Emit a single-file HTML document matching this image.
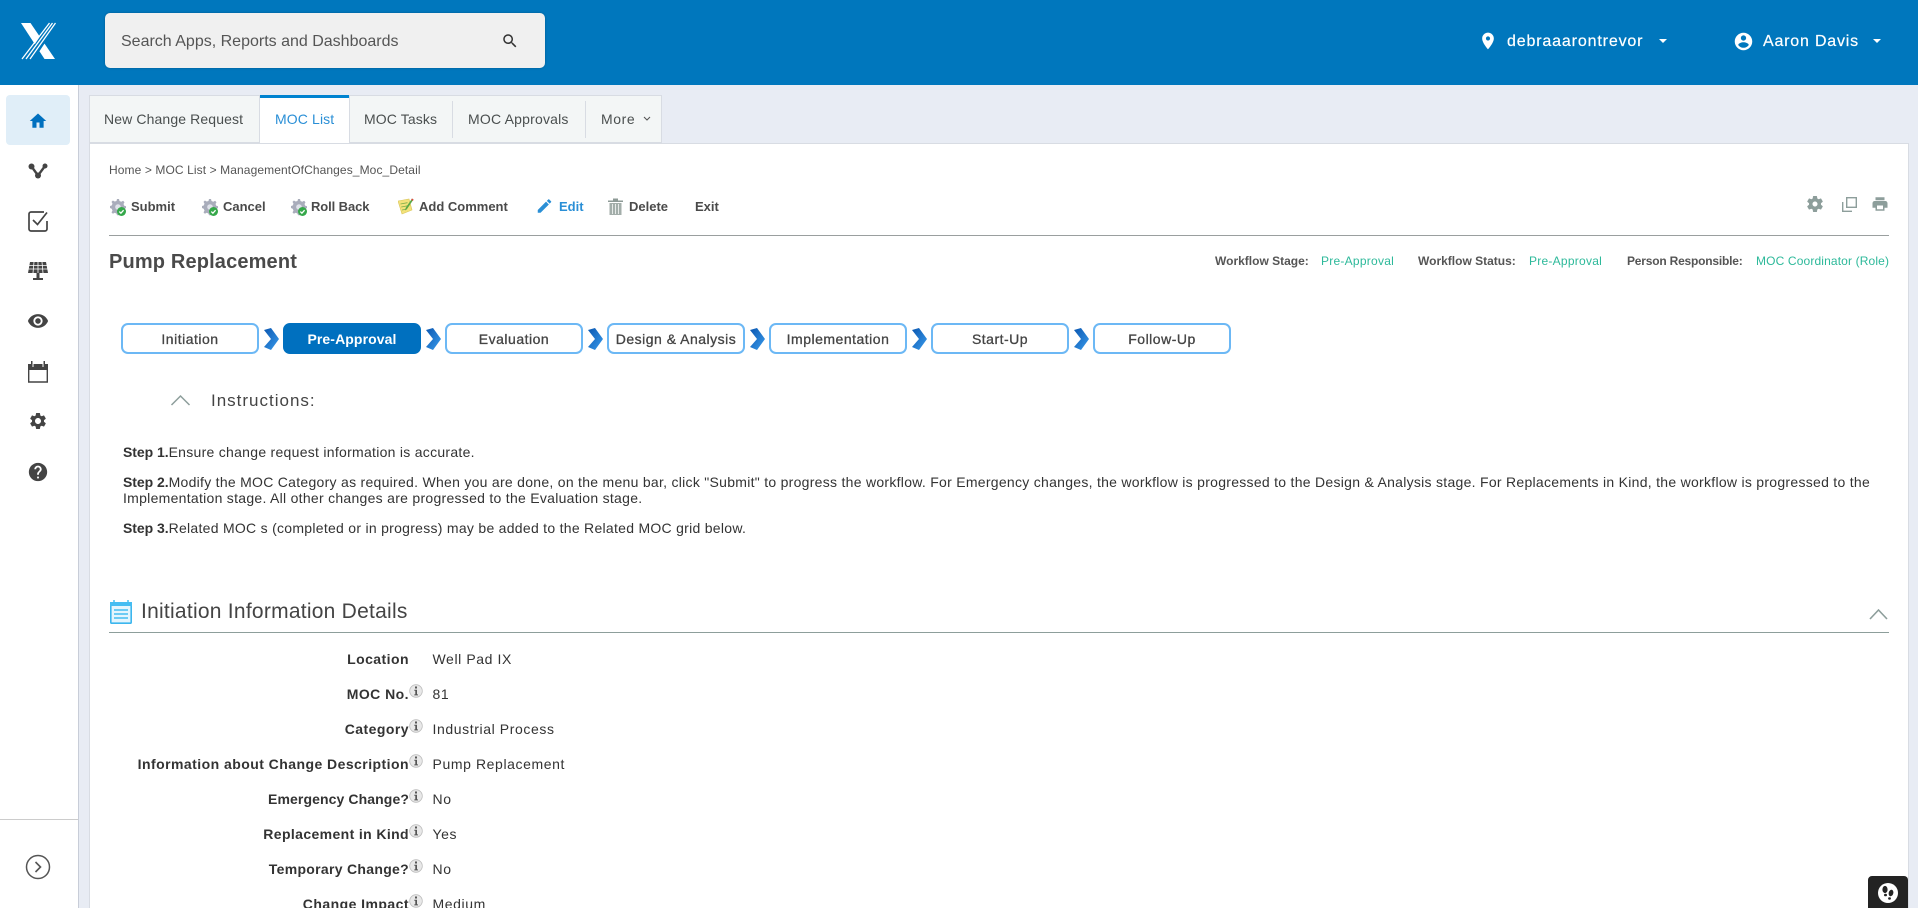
<!DOCTYPE html>
<html lang="en">
<head>
<meta charset="utf-8">
<title>Pump Replacement</title>
<style>
html,body{margin:0;padding:0;width:1918px;height:908px;overflow:hidden;background:#e8ecf4;font-family:"Liberation Sans",Arial,sans-serif;color:#444}
#page{position:relative;width:1918px;height:908px;overflow:hidden;filter:blur(.3px)}
.a{position:absolute}
.t{position:absolute;line-height:20px;white-space:nowrap}
svg{position:absolute;display:block}
#hdr{left:0;top:0;width:1918px;height:85px;background:#0077bd}
#search{left:105px;top:13px;width:440px;height:55px;background:#f0f0f0;border-radius:5px;box-shadow:0 0 2px rgba(0,0,0,.25)}
#side{left:0;top:85px;width:78px;height:823px;background:#fff;border-right:1px solid #c8cdd8}
#homebg{left:6px;top:95px;width:64px;height:50px;background:#e0eef8;border-radius:4px}
#panel{left:89px;top:143px;width:1820px;height:765px;background:#fff;box-sizing:border-box;border:1px solid #d8dce3;border-bottom:0}
.tab{position:absolute;top:95px;height:48px;background:#f3f6f6;box-sizing:border-box;border-top:1px solid #d8dce3}
.tabt{font-size:14px;letter-spacing:.12px;color:#4a4f4f;top:109px}
.sep{position:absolute;width:1px;top:101px;height:37px;background:#d8dce3}
.tb{font-size:13px;font-weight:bold;color:#4a4a4a;top:197px}
.wl{font-size:12px;font-weight:bold;color:#555;top:251px}
.wv{font-size:12px;color:#2db99a;top:251px;letter-spacing:.25px}
.st{position:absolute;top:323px;width:138px;height:31px;box-sizing:border-box;border:2px solid #6cb8f5;border-radius:7px;background:#fff;text-align:center;font-size:14px;line-height:27px;padding-top:1px;letter-spacing:.5px;color:#444;-webkit-text-stroke:.3px #444;white-space:nowrap}
.st.on{background:#0070bf;border-color:#0070bf;color:#fff;font-weight:bold;font-size:14px;letter-spacing:.1px;-webkit-text-stroke:0}
.p{font-size:14px;letter-spacing:.28px;color:#333;left:123px}
.p b{letter-spacing:-.05px}
.lb{font-size:14px;font-weight:bold;letter-spacing:.45px;color:#333;right:1509px}
.vl{font-size:14px;letter-spacing:.6px;color:#333;left:432.500px}
</style>
</head>
<body>
<div id="page">

<svg width="0" height="0" style="position:absolute">
  <defs>
    <linearGradient id="cg" x1="0" y1="0" x2="1" y2="1"><stop offset="0" stop-color="#0a56b0"/><stop offset="1" stop-color="#3a9cec"/></linearGradient>
    <symbol id="chev" viewBox="0 0 15 22"><path d="M0 2 7 0 15 11 7 22 0 19 7 11z" fill="url(#cg)"/></symbol>
    <symbol id="gearchk" viewBox="0 0 16 18">
      <path d="M7 1h2l.5 2 1.800.8 1.800-1 1.400 1.400-1 1.800.8 1.800 1.700.5v2l-1.700.5-.8 1.800 1 1.800-1.400 1.400-1.800-1-1.800.8-.5 1.700H7l-.5-1.700-1.800-.8-1.800 1-1.400-1.400 1-1.800-.8-1.800L0 10V8l1.700-.5.8-1.800-1-1.800 1.400-1.400 1.800 1L6.500 3z" fill="#a9adbb"/>
      <circle cx="8" cy="9" r="2.800" fill="#dfe2ea"/>
      <circle cx="11.500" cy="13.500" r="4.500" fill="#35a84a"/>
      <path d="M9.300 13.600l1.600 1.600 2.700-3" fill="none" stroke="#fff" stroke-width="1.300"/>
    </symbol>
    <symbol id="info" viewBox="0 0 14 14">
      <circle cx="7" cy="7" r="6.300" fill="#e8e8e8" stroke="#bdbdbd" stroke-width=".8"/>
      <rect x="6" y="2.500" width="2" height="2" fill="#555"/>
      <path d="M5.300 5.800H8v4.600h1v1H5.300v-1h1V6.800h-1z" fill="#555"/>
    </symbol>
  </defs>
</svg>

<!-- Header -->
<div class="a" id="hdr"></div>
<svg style="left:20px;top:21px" width="36" height="40" viewBox="0 0 36 40">
  <path d="M1 2h9.500L35 38H24.500z" fill="#fff"/>
  <path d="M31 2 7 38M33.500 2 11 38M36 2 15 34" stroke="#0077bd" stroke-width="3.400" fill="none"/>
  <path d="M29.500 2 2 38M32.500 2 6 38M35.500 2 10 38" stroke="#fff" stroke-width="1.300" fill="none"/>
</svg>
<div class="a" id="search"></div>
<span class="t" style="left:121px;top:32px;font-size:16px;color:#555">Search Apps, Reports and Dashboards</span>
<svg style="left:501px;top:32px" width="18" height="18" viewBox="0 0 24 24"><path fill="#333" d="M15.500 14h-.79l-.28-.27C15.410 12.590 16 11.110 16 9.500 16 5.910 13.090 3 9.500 3S3 5.910 3 9.500 5.910 16 9.500 16c1.610 0 3.090-.59 4.230-1.570l.27.28v.79l5 4.990L20.490 19l-4.990-5zm-6 0C7.010 14 5 11.990 5 9.500S7.010 5 9.500 5 14 7.010 14 9.500 11.990 14 9.500 14z"/></svg>
<svg style="left:1478px;top:31px" width="20" height="20" viewBox="0 0 24 24"><path fill="#fff" d="M12 2C8.130 2 5 5.130 5 9c0 5.250 7 13 7 13s7-7.750 7-13c0-3.870-3.130-7-7-7zm0 9.500c-1.380 0-2.500-1.120-2.500-2.500s1.120-2.500 2.500-2.500 2.500 1.120 2.500 2.500-1.120 2.500-2.500 2.500z"/></svg>
<span class="t" style="left:1507px;top:31.500px;font-size:16px;letter-spacing:.85px;color:#fff;-webkit-text-stroke:.2px #fff">debraaarontrevor</span>
<div class="a" style="left:1659px;top:39px;border:4px solid transparent;border-top:4px solid #fff;border-bottom:0"></div>
<svg style="left:1733px;top:31px" width="21" height="21" viewBox="0 0 24 24"><path fill="#fff" d="M12 2C6.480 2 2 6.480 2 12s4.480 10 10 10 10-4.480 10-10S17.520 2 12 2zm0 3c1.660 0 3 1.340 3 3s-1.340 3-3 3-3-1.340-3-3 1.340-3 3-3zm0 14.200c-2.500 0-4.710-1.280-6-3.220.03-1.990 4-3.080 6-3.080 1.990 0 5.970 1.090 6 3.080-1.290 1.940-3.500 3.220-6 3.220z"/></svg>
<span class="t" style="left:1763px;top:31.500px;font-size:16px;letter-spacing:.8px;color:#fff;-webkit-text-stroke:.2px #fff">Aaron Davis</span>
<div class="a" style="left:1873px;top:39px;border:4px solid transparent;border-top:4px solid #fff;border-bottom:0"></div>

<!-- Sidebar -->
<div class="a" id="side"></div>
<div class="a" id="homebg"></div>
<svg style="left:29px;top:112px" width="18" height="18" viewBox="0 0 24 24"><path fill="#0070bf" d="M10 21v-7h4v7h5.500v-9H23L12 2 1 12h3.500v9z"/></svg>
<svg style="left:28px;top:161px" width="20" height="20" viewBox="0 0 20 20"><g fill="#444"><circle cx="3.500" cy="5.500" r="3"/><circle cx="17" cy="5" r="2.500"/><circle cx="10" cy="14.500" r="3"/></g><path d="M3.500 5.500 10 14.500 17 5" stroke="#444" stroke-width="2.400" fill="none"/></svg>
<svg style="left:27px;top:210px" width="22" height="22" viewBox="0 0 22 22"><path d="M17 2H4a2 2 0 0 0-2 2v15a2 2 0 0 0 2 2h14a2 2 0 0 0 2-2V11" fill="none" stroke="#444" stroke-width="1.700"/><path d="M6 10l4.500 4.500L20 2.500" fill="none" stroke="#444" stroke-width="1.700"/></svg>
<svg style="left:28px;top:261px" width="20" height="20" viewBox="0 0 20 20"><path fill="#444" d="M2 1h16l2 11H0zM8.500 12h3v5H15v2H5v-2h3.500z"/><path stroke="#fff" stroke-width=".8" d="M1 4.500h18M.5 8h19M6 1 5 12M10 1v11M14 1l1 11"/></svg>
<svg style="left:27px;top:310px" width="22" height="22" viewBox="0 0 24 24"><path fill="#444" d="M12 4.500C7 4.500 2.730 7.610 1 12c1.730 4.390 6 7.500 11 7.500s9.270-3.110 11-7.500c-1.730-4.390-6-7.500-11-7.500zM12 17c-2.760 0-5-2.240-5-5s2.240-5 5-5 5 2.240 5 5-2.240 5-5 5zm0-8c-1.660 0-3 1.340-3 3s1.340 3 3 3 3-1.340 3-3-1.340-3-3-3z"/></svg>
<svg style="left:28px;top:361px" width="20" height="22" viewBox="0 0 20 22"><path fill="#444" d="M0 3h3V0h1.500v3h11V0H17v3h3v6H0z"/><path d="M.7 9v12h18.600V9" fill="#fff" stroke="#444" stroke-width="1.400"/><path d="M4.500 1h1v5h-1zM14.500 1h1v5h-1z" fill="#fff"/></svg>
<svg style="left:28px;top:411px" width="20" height="20" viewBox="0 0 24 24"><path fill="#444" d="M19.140 12.940c.04-.3.060-.61.060-.94 0-.32-.02-.64-.07-.94l2.030-1.580c.18-.14.23-.41.12-.61l-1.920-3.320c-.12-.22-.37-.29-.59-.22l-2.390.96c-.5-.38-1.030-.7-1.620-.94l-.36-2.540c-.04-.24-.24-.41-.48-.41h-3.840c-.24 0-.43.170-.47.41l-.36 2.540c-.59.24-1.130.57-1.620.94l-2.390-.96c-.22-.08-.47 0-.59.22L2.740 8.870c-.12.21-.08.47.12.61l2.030 1.580c-.05.3-.09.63-.09.94s.02.64.07.94l-2.030 1.580c-.18.14-.23.41-.12.61l1.920 3.320c.12.22.37.29.59.22l2.390-.96c.5.38 1.030.7 1.620.94l.36 2.540c.05.24.24.41.48.41h3.840c.24 0 .44-.17.47-.41l.36-2.540c.59-.24 1.130-.56 1.620-.94l2.390.96c.22.08.47 0 .59-.22l1.920-3.320c.12-.22.07-.47-.12-.61l-2.010-1.580zM12 15.600c-1.980 0-3.600-1.620-3.600-3.600s1.620-3.600 3.600-3.600 3.600 1.620 3.600 3.600-1.620 3.600-3.600 3.600z"/></svg>
<svg style="left:27px;top:461px" width="22" height="22" viewBox="0 0 24 24"><path fill="#444" d="M12 2C6.480 2 2 6.480 2 12s4.480 10 10 10 10-4.480 10-10S17.520 2 12 2zm1 17h-2v-2h2v2zm2.070-7.750l-.9.920C13.450 12.900 13 13.500 13 15h-2v-.5c0-1.100.45-2.100 1.170-2.830l1.240-1.260c.37-.36.59-.86.59-1.410 0-1.100-.9-2-2-2s-2 .9-2 2H8c0-2.210 1.790-4 4-4s4 1.790 4 4c0 .88-.36 1.680-.93 2.250z"/></svg>
<div class="a" style="left:0;top:819px;width:78px;height:1px;background:#ccc"></div>
<svg style="left:25px;top:854px" width="26" height="26" viewBox="0 0 26 26"><circle cx="13" cy="13" r="11.500" fill="none" stroke="#555" stroke-width="1.500"/><path d="M10.500 8 15.500 13 10.500 18" fill="none" stroke="#555" stroke-width="1.600"/></svg>

<!-- Panel and tabs -->
<div class="a" id="panel"></div>
<div class="tab" style="left:89px;width:171px;border-left:1px solid #d8dce3;border-right:1px solid #d8dce3;border-bottom:1px solid #d8dce3"></div>
<div class="tab" style="left:260px;width:89px;background:#fff;border-top:3px solid #0083d0"></div>
<div class="tab" style="left:349px;width:313px;border-left:1px solid #d8dce3;border-right:1px solid #d8dce3;border-bottom:1px solid #d8dce3"></div>
<div class="sep" style="left:452px"></div>
<div class="sep" style="left:585px"></div>
<span class="t tabt" style="left:104px">New Change Request</span>
<span class="t tabt" style="left:275px;color:#2a8fd6">MOC List</span>
<span class="t tabt" style="left:364px">MOC Tasks</span>
<span class="t tabt" style="left:468px;letter-spacing:.2px">MOC Approvals</span>
<span class="t tabt" style="left:601px;letter-spacing:.6px">More</span>
<svg style="left:643px;top:116px" width="8" height="6" viewBox="0 0 8 6"><path d="M1 1 4 4 7 1" fill="none" stroke="#555" stroke-width="1.100"/></svg>

<!-- Breadcrumb -->
<span class="t" style="left:109px;top:160px;font-size:12px;letter-spacing:.1px;color:#555">Home &gt; MOC List &gt; ManagementOfChanges_Moc_Detail</span>

<!-- Toolbar -->
<svg style="left:110px;top:198px" width="16" height="18"><use href="#gearchk" width="16" height="18"/></svg>
<span class="t tb" style="left:131px">Submit</span>
<svg style="left:202px;top:198px" width="16" height="18"><use href="#gearchk" width="16" height="18"/></svg>
<span class="t tb" style="left:223px">Cancel</span>
<svg style="left:291px;top:198px" width="16" height="18"><use href="#gearchk" width="16" height="18"/></svg>
<span class="t tb" style="left:311px;letter-spacing:-.1px">Roll Back</span>
<svg style="left:398px;top:198px" width="16" height="17" viewBox="0 0 16 17"><path d="M0 3 11 1l3 11-10 4z" fill="#f3e27a" stroke="#d8c45a" stroke-width=".6"/><path d="M2.500 6l7-1.300M3.200 9l7-1.300M4 12l5-1" stroke="#7fae4a" stroke-width=".8"/><path d="M15.500 1.500 9 11l-2 1.500.6-2.500L14 .5z" fill="#5aa845"/><path d="M14 .5l1.500 1L15 3l-1.800-1.200z" fill="#e2483d"/></svg>
<span class="t tb" style="left:419px">Add Comment</span>
<svg style="left:537px;top:198px" width="15" height="16" viewBox="2 2 20 20"><path fill="#2a8fd6" d="M3 17.250V21h3.750L17.810 9.940l-3.750-3.750L3 17.250zM20.710 7.040c.39-.39.39-1.020 0-1.410l-2.340-2.340c-.39-.39-1.020-.39-1.410 0l-1.830 1.830 3.750 3.750 1.830-1.830z"/></svg>
<span class="t tb" style="left:559px;color:#2a8fd6">Edit</span>
<svg style="left:608px;top:198px" width="15" height="17" viewBox="0 0 15 17"><path d="M0 2.500h15V4H0zM5 .5h5v2H5z" fill="#8d9a96"/><path d="M1.500 5h12v12h-12z" fill="#a3aeaa"/><path d="M4.500 6v10M7.500 6v10M10.500 6v10" stroke="#e6eae8" stroke-width="1"/></svg>
<span class="t tb" style="left:629px">Delete</span>
<span class="t tb" style="left:695px">Exit</span>

<svg style="left:1805px;top:194px" width="20" height="20" viewBox="0 0 24 24"><path fill="#8d9e9b" d="M19.140 12.940c.04-.3.060-.61.060-.94 0-.32-.02-.64-.07-.94l2.030-1.580c.18-.14.23-.41.12-.61l-1.920-3.320c-.12-.22-.37-.29-.59-.22l-2.390.96c-.5-.38-1.030-.7-1.620-.94l-.36-2.540c-.04-.24-.24-.41-.48-.41h-3.840c-.24 0-.43.170-.47.41l-.36 2.540c-.59.24-1.130.57-1.620.94l-2.390-.96c-.22-.08-.47 0-.59.22L2.740 8.870c-.12.21-.08.47.12.61l2.030 1.580c-.05.3-.09.63-.09.94s.02.64.07.94l-2.030 1.580c-.18.14-.23.41-.12.61l1.920 3.320c.12.22.37.29.59.22l2.390-.96c.5.38 1.030.7 1.620.94l.36 2.540c.05.24.24.41.48.41h3.840c.24 0 .44-.17.47-.41l.36-2.540c.59-.24 1.130-.56 1.620-.94l2.390.96c.22.08.47 0 .59-.22l1.920-3.320c.12-.22.07-.47-.12-.61l-2.010-1.580zM12 15c-1.650 0-3-1.350-3-3s1.350-3 3-3 3 1.350 3 3-1.350 3-3 3z"/></svg>
<svg style="left:1842px;top:197px" width="15" height="15" viewBox="0 0 15 15"><rect x="4.700" y=".7" width="9.600" height="9.600" fill="none" stroke="#8d9e9b" stroke-width="1.400"/><path d="M.7 5v9.300H10" fill="none" stroke="#8d9e9b" stroke-width="1.400"/></svg>
<svg style="left:1871px;top:195px" width="18" height="18" viewBox="0 0 24 24"><path fill="#8d9e9b" d="M19 8H5c-1.660 0-3 1.340-3 3v6h4v4h12v-4h4v-6c0-1.660-1.340-3-3-3zm-3 11H8v-5h8v5zm-1-16H6v4h12V3z"/></svg>
<div class="a" style="left:109px;top:235px;width:1780px;height:1px;background:#9a9f9f"></div>

<!-- Title row -->
<span class="t" style="left:109px;top:251.500px;font-size:20px;font-weight:bold;letter-spacing:.15px;color:#4a4a4a">Pump Replacement</span>
<span class="t wl" style="left:1215px">Workflow Stage:</span>
<span class="t wv" style="left:1321px">Pre-Approval</span>
<span class="t wl" style="left:1418px">Workflow Status:</span>
<span class="t wv" style="left:1529px">Pre-Approval</span>
<span class="t wl" style="left:1627px;letter-spacing:-.2px">Person Responsible:</span>
<span class="t wv" style="left:1756px;letter-spacing:.14px">MOC Coordinator (Role)</span>

<!-- Stages -->
<div class="st" style="left:121px">Initiation</div>
<svg style="left:264px;top:328px" width="15" height="22"><use href="#chev" width="15" height="22"/></svg>
<div class="st on" style="left:283px">Pre-Approval</div>
<svg style="left:426px;top:328px" width="15" height="22"><use href="#chev" width="15" height="22"/></svg>
<div class="st" style="left:445px">Evaluation</div>
<svg style="left:588px;top:328px" width="15" height="22"><use href="#chev" width="15" height="22"/></svg>
<div class="st" style="left:607px">Design &amp; Analysis</div>
<svg style="left:750px;top:328px" width="15" height="22"><use href="#chev" width="15" height="22"/></svg>
<div class="st" style="left:769px">Implementation</div>
<svg style="left:912px;top:328px" width="15" height="22"><use href="#chev" width="15" height="22"/></svg>
<div class="st" style="left:931px">Start-Up</div>
<svg style="left:1074px;top:328px" width="15" height="22"><use href="#chev" width="15" height="22"/></svg>
<div class="st" style="left:1093px">Follow-Up</div>

<!-- Instructions -->
<svg style="left:170px;top:393px" width="21" height="14" viewBox="0 0 21 14"><path d="M1.500 12 10.500 3 19.500 12" fill="none" stroke="#8d9e9b" stroke-width="1.500"/></svg>
<span class="t" style="left:211px;top:391px;font-size:17px;letter-spacing:1px;color:#444">Instructions:</span>
<span class="t p" style="top:441.500px"><b>Step 1.</b>Ensure change request information is accurate.</span>
<span class="t p" style="top:471.500px"><b>Step 2.</b>Modify the MOC Category as required. When you are done, on the menu bar, click "Submit" to progress the workflow. For Emergency changes, the workflow is progressed to the Design &amp; Analysis stage. For Replacements in Kind, the workflow is progressed to the</span>
<span class="t p" style="top:487.500px">Implementation stage. All other changes are progressed to the Evaluation stage.</span>
<span class="t p" style="top:517.500px"><b>Step 3.</b>Related MOC s (completed or in progress) may be added to the Related MOC grid below.</span>

<!-- Section -->
<svg style="left:110px;top:600px" width="22" height="24" viewBox="0 0 22 24"><rect x=".8" y="2.800" width="20.400" height="20.400" rx="1" fill="#e4f5fd" stroke="#3cb6ee" stroke-width="1.600"/><rect x="0" y="2" width="22" height="4" fill="#45bdf2"/><path d="M4 0v4M18 0v4" stroke="#45bdf2" stroke-width="1.500"/><path d="M4 10h14M4 14h14M4 18h14" stroke="#45bdf2" stroke-width="1.500"/></svg>
<span class="t" style="left:141px;top:602px;font-size:21px;letter-spacing:.25px;color:#444">Initiation Information Details</span>
<div class="a" style="left:109px;top:632px;width:1780px;height:1px;background:#8d9e9b"></div>
<svg style="left:1869px;top:607px" width="19" height="13" viewBox="0 0 19 13"><path d="M1 12 9.500 3 18 12" fill="none" stroke="#8d9e9b" stroke-width="1.600"/></svg>

<!-- Fields -->
<span class="t lb" style="top:648.500px">Location</span><span class="t vl" style="top:648.500px">Well Pad IX</span>

<span class="t lb" style="top:683.500px">MOC No.</span><span class="t vl" style="top:683.500px">81</span>
<svg style="left:409px;top:684px" width="14" height="14"><use href="#info" width="14" height="14"/></svg>

<span class="t lb" style="top:718.500px">Category</span><span class="t vl" style="top:718.500px">Industrial Process</span>
<svg style="left:409px;top:719px" width="14" height="14"><use href="#info" width="14" height="14"/></svg>

<span class="t lb" style="top:753.500px">Information about Change Description</span><span class="t vl" style="top:753.500px">Pump Replacement</span>
<svg style="left:409px;top:754px" width="14" height="14"><use href="#info" width="14" height="14"/></svg>

<span class="t lb" style="top:788.500px;letter-spacing:.1px">Emergency Change?</span><span class="t vl" style="top:788.500px">No</span>
<svg style="left:409px;top:789px" width="14" height="14"><use href="#info" width="14" height="14"/></svg>

<span class="t lb" style="top:823.500px;letter-spacing:.38px">Replacement in Kind</span><span class="t vl" style="top:823.500px">Yes</span>
<svg style="left:409px;top:824px" width="14" height="14"><use href="#info" width="14" height="14"/></svg>

<span class="t lb" style="top:858.500px;letter-spacing:.3px">Temporary Change?</span><span class="t vl" style="top:858.500px">No</span>
<svg style="left:409px;top:859px" width="14" height="14"><use href="#info" width="14" height="14"/></svg>

<span class="t lb" style="top:893.500px">Change Impact</span><span class="t vl" style="top:893.500px">Medium</span>
<svg style="left:409px;top:894px" width="14" height="14"><use href="#info" width="14" height="14"/></svg>

<!-- Floating button -->
<div class="a" style="left:1868px;top:876px;width:40px;height:32px;background:#232323;border-radius:4px 4px 0 0"></div>
<svg style="left:1878px;top:883px" width="20" height="20" viewBox="0 0 20 20"><circle cx="10" cy="10" r="10" fill="#fff"/><ellipse cx="7" cy="6.500" rx="2.600" ry="3.600" fill="#232323"/><ellipse cx="7.500" cy="12" rx="1.500" ry="1.300" fill="#232323"/><ellipse cx="13" cy="10" rx="2.300" ry="3.300" transform="rotate(15 13 10)" fill="#232323"/><ellipse cx="11.500" cy="15.500" rx="1.400" ry="1.200" fill="#232323"/></svg>

</div>
</body>
</html>
